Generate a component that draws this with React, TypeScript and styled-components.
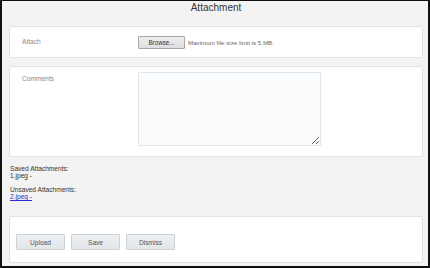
import React from "react";
import styled, { createGlobalStyle } from "styled-components";

const Global = createGlobalStyle`
  html, body { margin: 0; padding: 0; }
  body { font-family: "Liberation Sans", Arial, sans-serif; }
  * { box-sizing: border-box; }
`;

const Frame = styled.div`
  width: 430px;
  height: 268px;
  border-style: solid;
  border-color: #111;
  border-width: 1px 2px 2px 2px;
  background: #f3f3f3;
  padding: 0 5px 0 7px;
  display: flex;
  flex-direction: column;
`;

const Title = styled.div`
  font-size: 10px;
  line-height: 13px;
  color: #333;
  text-align: center;
  margin: 0 0 12px 0;
`;

const Panel = styled.div<{ $h?: number; $pt?: number; $mb?: number }>`
  background: #fff;
  border: 1px solid #dfe4e8;
  border-radius: 2px;
  ${(p) => (p.$h ? `height: ${p.$h}px;` : "")}
  margin-bottom: ${(p) => p.$mb ?? 0}px;
`;

const Row = styled.div<{ $align: string; $pt: number }>`
  display: flex;
  align-items: ${(p) => p.$align};
  height: 100%;
  padding-top: ${(p) => p.$pt}px;
`;

const Label = styled.div<{ $mt?: number }>`
  width: 128px;
  padding-left: 12px;
  font-size: 6.6px;
  line-height: 8px;
  color: #8a8a8a;
  margin-top: ${(p) => p.$mt ?? 0}px;
`;

const BrowseButton = styled.button`
  width: 47px;
  height: 13px;
  padding: 0;
  border: 1px solid #a8a8a8;
  border-radius: 1px;
  background: linear-gradient(#eeeeee, #dedede);
  font-family: "Liberation Sans", Arial, sans-serif;
  font-size: 6.3px;
  color: #333;
`;

const Hint = styled.span`
  font-size: 6.2px;
  color: #666;
  margin-left: 3px;
`;

const Comments = styled.textarea`
  width: 183px;
  height: 74px;
  border: 1px solid #e0e5ea;
  border-radius: 1px;
  background: #fbfcfd;
  resize: both;
  outline: none;
`;

const AttachBlock = styled.div`
  padding: 8px 0 0 1px;
  height: 59px;
  font-size: 6.6px;
  line-height: 7px;
  color: #333;
`;

const Group = styled.div`
  margin-bottom: 7px;
`;

const Link = styled.a`
  color: #2b2bd0;
  text-decoration: underline;
`;

const ButtonBar = styled.div`
  display: flex;
  gap: 6px;
  padding: 17px 0 12px 6px;
`;

const ActionButton = styled.button`
  width: 49px;
  height: 16px;
  padding: 0;
  border: 1px solid #cdd2d6;
  border-radius: 1px;
  background: linear-gradient(#eef0f2, #e2e6e9);
  font-family: "Liberation Sans", Arial, sans-serif;
  font-size: 6.6px;
  color: #555;
`;

export default function App() {
  return (
    <>
      <Global />
      <Frame>
        <Title>Attachment</Title>
        <Panel $h={32} $mb={8}>
          <Row $align="center" $pt={0}>
            <Label>Attach</Label>
            <BrowseButton>Browse...</BrowseButton>
            <Hint>Maximum file size limit is 5 MB.</Hint>
          </Row>
        </Panel>
        <Panel $h={91}>
          <Row $align="flex-start" $pt={5}>
            <Label $mt={3}>Comments</Label>
            <Comments />
          </Row>
        </Panel>
        <AttachBlock>
          <Group>
            <div>Saved Attachments:</div>
            <div>1.jpeg -</div>
          </Group>
          <Group>
            <div>Unsaved Attachments:</div>
            <div>
              <Link href="#">2.jpeg -</Link>
            </div>
          </Group>
        </AttachBlock>
        <Panel>
          <ButtonBar>
            <ActionButton>Upload</ActionButton>
            <ActionButton>Save</ActionButton>
            <ActionButton>Dismiss</ActionButton>
          </ButtonBar>
        </Panel>
      </Frame>
    </>
  );
}
